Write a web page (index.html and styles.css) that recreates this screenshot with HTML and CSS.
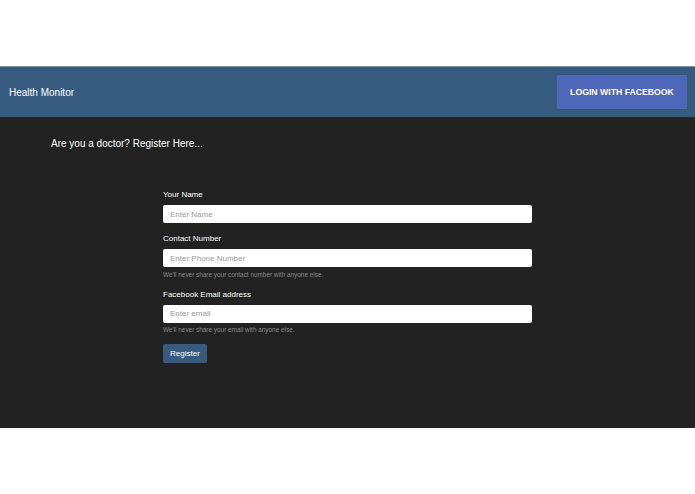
FILE: index.html
```html
<!DOCTYPE html>
<html lang="en">
<head>
    <meta charset="UTF-8">
    <meta name="viewport" content="width=device-width, initial-scale=1.0">
    <title>Health Monitor</title>
    <link rel="stylesheet" href="styles.css">
</head>
<body>
    <div class="top-space"></div>
    <nav class="navbar">
        <span class="brand">Health Monitor</span>
        <button type="button" class="fb-btn">LOGIN WITH FACEBOOK</button>
    </nav>
    <div class="main">
        <h4 class="title">Are you a doctor? Register Here...</h4>
        <form class="reg-form">
            <div class="group">
                <label>Your Name</label>
                <input type="text" placeholder="Enter Name">
            </div>
            <div class="group">
                <label>Contact Number</label>
                <input type="text" placeholder="Enter Phone Number">
                <small class="help">We'll never share your contact number with anyone else.</small>
            </div>
            <div class="group">
                <label>Facebook Email address</label>
                <input type="email" placeholder="Enter email">
                <small class="help">We'll never share your email with anyone else.</small>
            </div>
            <button type="submit" class="btn">Register</button>
        </form>
    </div>
</body>
</html>
```

FILE: styles.css
```css
body {
  margin: 0;
  font-family: "Liberation Sans", Arial, sans-serif;
  background-color: #fff;
}
.top-space {
  height: 66px;
}
.navbar {
  height: 50px;
  border-top: 1px solid #7f93a8;
  background-color: #375a7f;
  display: flex;
  justify-content: space-between;
  align-items: center;
  padding: 0 8px 0 9px;
}
.brand {
  color: #fff;
  font-size: 10px;
}
.fb-btn {
  width: 130px;
  height: 34px;
  background-color: #4f67b9;
  border: none;
  color: #fff;
  font-family: inherit;
  font-weight: bold;
  font-size: 8.7px;
  padding: 0;
}
.main {
  background-color: #222;
  height: 311px;
  box-sizing: border-box;
  padding-top: 20px;
}
.title {
  margin: 0;
  padding-left: 51px;
  color: #fff;
  font-weight: normal;
  font-size: 10px;
  line-height: 13px;
}
.reg-form {
  width: 369px;
  margin: 39px 0 0 163px;
}
.group {
  margin-bottom: 10px;
}
.group label {
  display: block;
  color: #fff;
  font-size: 8px;
  line-height: 11px;
  margin-bottom: 5px;
}
.group input {
  display: block;
  width: 100%;
  height: 18px;
  box-sizing: border-box;
  border: none;
  border-radius: 2px;
  padding: 0 7px;
  font-family: inherit;
  font-size: 8px;
  outline: none;
}
.group input::placeholder {
  color: #9a9a9a;
}
.help {
  display: block;
  margin-top: 2.5px;
  color: #888;
  font-size: 6.4px;
  line-height: 9px;
}
.btn {
  display: block;
  height: 19px;
  padding: 0 7px;
  background-color: #375a7f;
  border: none;
  border-radius: 2px;
  color: #fff;
  font-family: inherit;
  font-size: 8px;
}
```
